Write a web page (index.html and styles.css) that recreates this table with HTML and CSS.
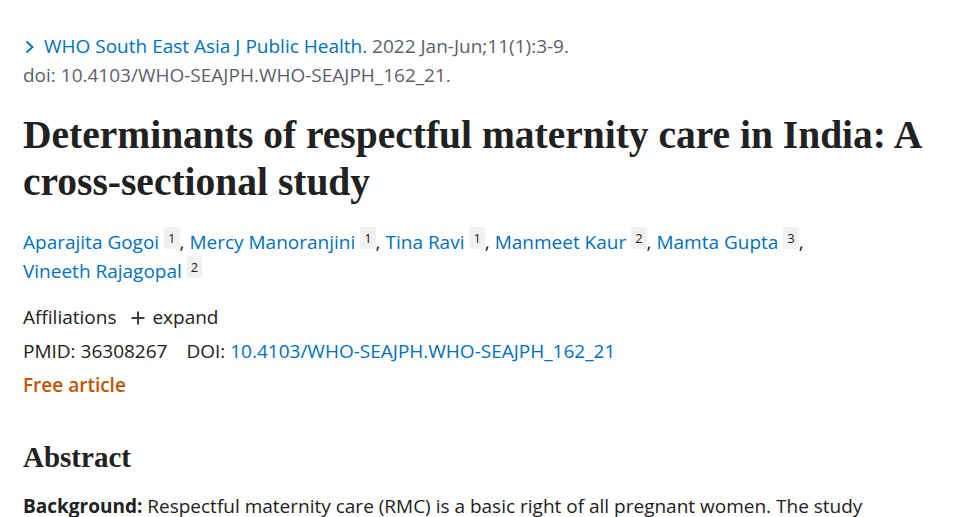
FILE: index.html
```html
<!DOCTYPE html>
<html lang="en">
<head>
<meta charset="utf-8">
<title>Determinants of respectful maternity care in India</title>
<link rel="stylesheet" href="styles.css">
</head>
<body>
<main class="article">
  <div class="citation">
    <div class="journal-line">
      <svg class="chev" width="10" height="14" viewBox="0 0 10 14"><path d="M1.5 1.5 L7.5 7 L1.5 12.5" fill="none" stroke="#0071bc" stroke-width="1.8"/></svg>
      <a class="link" href="#">WHO South East Asia J Public Health.</a><span class="cit"> 2022 Jan-Jun;11(1):3-9.</span>
    </div>
    <div class="cit">doi: 10.4103/WHO-SEAJPH.WHO-SEAJPH_162_21.</div>
  </div>
  <h1 class="title">Determinants of respectful maternity care in India: A cross-sectional study</h1>
  <div class="authors">
    <a class="link" href="#">Aparajita Gogoi</a> <sup class="aff">1</sup>, <a class="link" href="#">Mercy Manoranjini</a> <sup class="aff">1</sup>, <a class="link" href="#">Tina Ravi</a> <sup class="aff">1</sup>, <a class="link" href="#">Manmeet Kaur</a> <sup class="aff">2</sup>, <a class="link" href="#">Mamta Gupta</a> <sup class="aff">3</sup>,<br>
    <a class="link" href="#">Vineeth Rajagopal</a> <sup class="aff">2</sup>
  </div>
  <div class="row">Affiliations <span class="expand"><svg class="plus" width="14" height="14" viewBox="0 0 14 14"><path d="M7 0.5 V13.5 M0.5 7 H13.5" stroke="#3d3d3d" stroke-width="2"/></svg>expand</span></div>
  <div class="row">PMID: 36308267 <span class="doi">DOI: <a class="link" href="#">10.4103/WHO-SEAJPH.WHO-SEAJPH_162_21</a></span></div>
  <div class="row free">Free article</div>
  <h2 class="abstract-h">Abstract</h2>
  <p class="abstract"><strong>Background:</strong> Respectful maternity care (RMC) is a basic right of all pregnant women. The study</p>
</main>
</body>
</html>
```

FILE: styles.css
```css
html, body {
  margin: 0;
  padding: 0;
  background: #fff;
}
body {
  font-family: "Open Sans", "Noto Sans", sans-serif;
  font-size: 19px;
  color: #212121;
}
.article {
  padding: 32px 20px 0 23px;
}
.link {
  color: #0071bc;
  text-decoration: none;
}
.citation {
  line-height: 29px;
}
.cit {
  color: #5b616b;
}
.journal-line {
  display: flex;
  align-items: center;
  white-space: pre;
}
.chev {
  margin: 0 9px 0 2px;
}
.title {
  font-family: "Liberation Serif", serif;
  font-weight: 700;
  font-size: 39.5px;
  line-height: 47px;
  margin: 22px 0 22px;
  color: #212121;
}
.authors {
  line-height: 29px;
  margin-bottom: 14px;
}
.aff {
  font-size: 13px;
  background: #f1f1f1;
  color: #212121;
  padding: 2px 4px;
  border-radius: 2px;
  vertical-align: 6px;
  line-height: 1;
}
.row {
  line-height: 34px;
}
.expand {
  margin-left: 10px;
  color: #212121;
}
.plus {
  margin-right: 7px;
  vertical-align: -1px;
}
.doi {
  margin-left: 14px;
}
.free {
  color: #c05600;
  font-weight: 600;
}
.abstract-h {
  font-family: "Liberation Serif", serif;
  font-weight: 700;
  font-size: 29px;
  line-height: 36px;
  margin: 37px 0 17px;
}
.abstract {
  margin: 0;
  line-height: 29px;
}
```
